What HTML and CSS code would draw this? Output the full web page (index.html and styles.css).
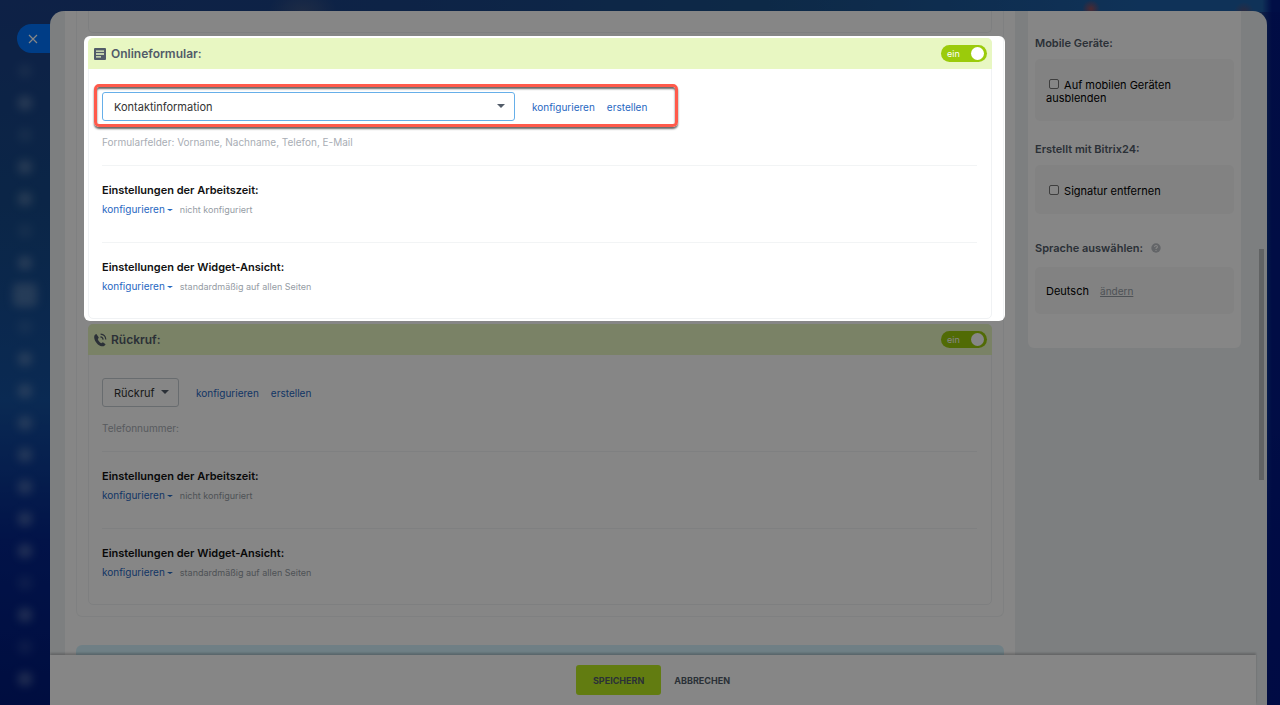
FILE: index.html
```html
<!DOCTYPE html>
<html lang="de">
<head>
    <meta charset="UTF-8">
    <meta name="viewport" content="width=device-width, initial-scale=1.0">
    <title>Widget bearbeiten</title>
    <link rel="stylesheet" href="styles.css">
</head>
<body>
    <div class="rail">
        <span class="rail-icon faint"></span>
        <span class="rail-icon"></span>
        <span class="rail-icon faint"></span>
        <span class="rail-icon"></span>
        <span class="rail-icon"></span>
        <span class="rail-icon faint"></span>
        <span class="rail-icon"></span>
        <span class="rail-icon active"></span>
        <span class="rail-icon faint"></span>
        <span class="rail-icon"></span>
        <span class="rail-icon"></span>
        <span class="rail-icon"></span>
        <span class="rail-icon"></span>
        <span class="rail-icon"></span>
        <span class="rail-icon"></span>
        <span class="rail-icon"></span>
        <span class="rail-icon faint"></span>
        <span class="rail-icon"></span>
        <span class="rail-icon faint"></span>
        <span class="rail-icon"></span>
    </div>

    <button class="close-btn" type="button" aria-label="Schließen">
        <svg width="10" height="10" viewBox="0 0 10 10"><path d="M1 1l8 8M9 1L1 9" stroke="#fff" stroke-width="1.2" fill="none"/></svg>
    </button>

    <div class="panel">
        <div class="content">
            <main class="main">
                <div class="group">
                    <div class="card card-prev"></div>

                    <section class="card">
                        <div class="card-header">
                            <svg class="card-icon" width="14" height="14" viewBox="0 0 14 14">
                                <path d="M2 1h10a1 1 0 0 1 1 1v10a1 1 0 0 1-1 1H2a1 1 0 0 1-1-1V2a1 1 0 0 1 1-1z" fill="#525c69"/>
                                <path d="M3 4.2h8M3 7h8M3 9.8h5" stroke="#e8f7c2" stroke-width="1.3"/>
                            </svg>
                            <h2>Onlineformular:</h2>
                            <button class="switch" type="button" role="switch" aria-checked="true">ein</button>
                        </div>
                        <div class="card-body">
                            <div class="form-row highlighted">
                                <select class="select focused" aria-label="Onlineformular">
                                    <option>Kontaktinformation</option>
                                </select>
                                <a href="#">konfigurieren</a>
                                <a href="#">erstellen</a>
                            </div>
                            <p class="hint">Formularfelder: Vorname, Nachname, Telefon, E-Mail</p>
                            <div class="setting">
                                <h3>Einstellungen der Arbeitszeit:</h3>
                                <div class="setting-row"><a class="drop" href="#">konfigurieren</a><span>nicht konfiguriert</span></div>
                            </div>
                            <div class="setting">
                                <h3>Einstellungen der Widget-Ansicht:</h3>
                                <div class="setting-row"><a class="drop" href="#">konfigurieren</a><span>standardmäßig auf allen Seiten</span></div>
                            </div>
                        </div>
                    </section>

                    <section class="card">
                        <div class="card-header">
                            <svg class="card-icon" width="14" height="14" viewBox="0 0 14 14">
                                <path d="M3.4 1C1.8 1.5 1 2.8 1.2 4.7 1.7 8.6 5.2 12.7 8.8 13.3c1.8.3 3.2-.5 3.800-2L9.900 9.300 8.200 10.200C6.700 9.400 5.400 7.800 4.800 6.200L5.800 4.600z" fill="#525c69"/>
                                <path d="M7.400 3.900c1.500.1 2.600 1.200 2.700 2.700M7.600 1.200c3 .2 5 2.400 5.200 5.300" stroke="#525c69" stroke-width="1.2" fill="none"/>
                            </svg>
                            <h2>Rückruf:</h2>
                            <button class="switch" type="button" role="switch" aria-checked="true">ein</button>
                        </div>
                        <div class="card-body">
                            <div class="form-row">
                                <select class="select small" aria-label="Rückruf">
                                    <option>Rückruf</option>
                                </select>
                                <a href="#">konfigurieren</a>
                                <a href="#">erstellen</a>
                            </div>
                            <p class="hint">Telefonnummer:</p>
                            <div class="setting">
                                <h3>Einstellungen der Arbeitszeit:</h3>
                                <div class="setting-row"><a class="drop" href="#">konfigurieren</a><span>nicht konfiguriert</span></div>
                            </div>
                            <div class="setting">
                                <h3>Einstellungen der Widget-Ansicht:</h3>
                                <div class="setting-row"><a class="drop" href="#">konfigurieren</a><span>standardmäßig auf allen Seiten</span></div>
                            </div>
                        </div>
                    </section>
                </div>
                <div class="next-group"></div>
            </main>

            <aside class="side">
                <h4>Mobile Geräte:</h4>
                <div class="side-box">
                    <label><input type="checkbox"> Auf mobilen Geräten ausblenden</label>
                </div>
                <h4>Erstellt mit Bitrix24:</h4>
                <div class="side-box">
                    <label><input type="checkbox"> Signatur entfernen</label>
                </div>
                <h4 class="with-help">Sprache auswählen:
                    <svg width="10" height="10" viewBox="0 0 10 10">
                        <circle cx="5" cy="5" r="4.7" fill="#bdc1c6"/>
                        <path d="M3.6 3.9C3.6 2 6.5 2.2 6.4 3.9 6.3 4.8 5 4.8 5 6M5 6.9v1" stroke="#fff" stroke-width="1.1" fill="none"/>
                    </svg>
                </h4>
                <div class="side-box language">Deutsch <a href="#">ändern</a></div>
            </aside>
        </div>
        <div class="scrollbar"></div>

        <footer class="footer">
            <button class="btn btn-save" type="button">SPEICHERN</button>
            <button class="btn btn-cancel" type="button">ABBRECHEN</button>
        </footer>
    </div>

    <div class="spotlight"></div>
</body>
</html>
```
FILE: styles.css
```css
*, *::before, *::after {
    box-sizing: border-box;
}
body {
    margin: 0;
    height: 100vh;
    padding: 11px 13px 0 50px;
    position: relative;
    overflow: hidden;
    font-family: Inter, "Liberation Sans", sans-serif;
    font-size: 10px;
    line-height: 14px;
    color: #000;
    background:
        radial-gradient(circle at 1091px 9px, rgba(200, 70, 60, 0.7), transparent 9px),
        radial-gradient(circle at 1244px 12px, rgba(120, 70, 90, 0.6), transparent 10px),
        radial-gradient(ellipse at 303px 12px, rgba(90, 100, 130, 0.5), transparent 34px),
        linear-gradient(to right, transparent 50px, transparent 1262px, rgba(0, 20, 130, 0.9) 1272px),
        linear-gradient(to right, transparent, #1a4386 30%, #1a4f88 60%, #1e60a8 90%) top / 100% 12px no-repeat,
        linear-gradient(to bottom, #1b3f85 0, #154887 200px, #14509e 400px, #04258a 540px, #001a7a 705px);
}
h2, h3, h4, p {
    margin: 0;
}
a {
    color: #1f67c1;
    text-decoration: none;
}

/* blurred icons of the page behind */
.rail {
    position: absolute;
    top: 55px;
    left: 0;
    width: 50px;
    display: flex;
    flex-direction: column;
    align-items: center;
}
.rail-icon {
    width: 14px;
    height: 14px;
    margin: 9px 0;
    border-radius: 5px;
    background: rgba(170, 185, 210, 0.35);
    filter: blur(4px);
}
.rail-icon.faint {
    opacity: 0.4;
}
.rail-icon.active {
    width: 24px;
    height: 24px;
    margin: 4px 0;
}

.close-btn {
    position: absolute;
    top: 24px;
    left: 17px;
    width: 40px;
    height: 29px;
    padding: 0 16px 0 7px;
    border: none;
    border-radius: 15px 0 0 15px;
    background: #0075ff;
    display: flex;
    align-items: center;
    justify-content: center;
}

.panel {
    position: relative;
    height: 100%;
    display: flex;
    flex-direction: column;
    overflow: hidden;
    border-radius: 14px 14px 0 0;
    background: #eef2f4;
}
.content {
    flex: 1;
    min-height: 0;
    display: flex;
    align-items: flex-start;
    padding: 0 26px 0 15px;
    overflow: hidden;
}
.main {
    flex: 1;
    padding: 0 11px;
    background: #fff;
}
.group {
    padding: 0 11px 11px;
    border: 1px solid #f2f4f5;
    border-top: none;
    border-radius: 0 0 6px 6px;
}
.next-group {
    height: 40px;
    margin-top: 28px;
    border-radius: 6px 6px 0 0;
    background: #d3f2fd;
}

.card {
    margin-top: 5px;
    border: 1px solid #f0f2f4;
    border-radius: 5px;
}
.card-prev {
    height: 22px;
    margin-top: 0;
    border-top: none;
    border-radius: 0 0 5px 5px;
}
.card-header {
    display: flex;
    align-items: center;
    height: 31px;
    margin: -1px -1px 0;
    padding: 0 5px;
    border-radius: 5px 5px 0 0;
    background: #e8f7c2;
}
.card-icon {
    margin-right: 4px;
}
.card-header h2 {
    flex: 1;
    font-size: 12px;
    font-weight: 600;
    color: #525c69;
}
.switch {
    position: relative;
    width: 46px;
    height: 17px;
    padding: 0 0 0 6px;
    border: none;
    border-radius: 9px;
    background: #9bcb0b;
    color: #fff;
    font-family: inherit;
    font-size: 9px;
    text-align: left;
}
.switch::after {
    content: "";
    position: absolute;
    top: 2px;
    right: 3px;
    width: 13px;
    height: 13px;
    border-radius: 50%;
    background: #fff;
}

.card-body {
    padding: 23px 14px 0 13px;
}
.form-row {
    position: relative;
    display: flex;
    align-items: center;
    gap: 12px;
}
.highlighted::after {
    content: "";
    position: absolute;
    top: -8px;
    left: -8px;
    width: 584px;
    height: 43px;
    border: 3px solid #ff5a4b;
    border-radius: 5px;
    box-shadow: 0 2px 2px rgba(0, 0, 0, 0.6), inset 0 2px 2px rgba(0, 0, 0, 0.6);
    pointer-events: none;
}
.select {
    appearance: none;
    width: 413px;
    height: 29px;
    margin-right: 5px;
    padding: 0 11px;
    border: 1px solid #c6cdd3;
    border-radius: 3px;
    background: #fff;
    color: #333;
    font-family: inherit;
    font-size: 11px;
}
.select.focused {
    border-color: #66afe9;
}
.select.small {
    width: 77px;
}
.form-row::before {
    content: "";
    position: absolute;
    top: 12px;
    left: 395px;
    border: 4px solid transparent;
    border-top-color: #525c69;
    border-bottom: none;
}
.form-row:not(.highlighted)::before {
    left: 59px;
}
.hint {
    margin: 14px 0 16px;
    color: #a8adb4;
}
.setting {
    padding: 17px 0 25px;
    border-top: 1px solid #f2f4f5;
}
.setting:last-child {
    padding-bottom: 24px;
}
.setting h3 {
    margin-bottom: 5px;
    font-size: 11px;
    font-weight: 600;
    color: #111;
}
.setting-row {
    display: flex;
    align-items: baseline;
    gap: 7px;
}
.setting-row span {
    font-size: 9px;
    color: #959ca4;
}
.drop::after {
    content: "";
    display: inline-block;
    margin-left: 2px;
    vertical-align: 2px;
    border: solid transparent;
    border-width: 2px 3px 0;
    border-top-color: #1f67c1;
}

.side {
    width: 213px;
    margin-left: 13px;
    padding: 25px 7px 13px;
    border-radius: 0 0 6px 6px;
    background: #fff;
}
.side h4 {
    margin-bottom: 9px;
    font-size: 11px;
    font-weight: 600;
    color: #525c69;
}
.side .with-help {
    display: flex;
    align-items: center;
    gap: 8px;
    margin: 27px 0 12px;
}
.side-box {
    margin-bottom: 21px;
    padding: 20px 11px 16px;
    border-radius: 5px;
    background: #f8f8f8;
    font-size: 11px;
    line-height: 13px;
}
.side-box label {
    display: block;
}
.side-box input {
    appearance: none;
    width: 10px;
    height: 10px;
    margin: 0 2px 0 3px;
    border: 1px solid #767676;
    border-radius: 2px;
    background: #fff;
}
.side-box.language {
    padding: 18px 11px 16px;
}
.language a {
    margin-left: 8px;
    font-size: 10px;
    color: #959ca4;
    text-decoration: underline;
}

.scrollbar {
    position: absolute;
    top: 238px;
    right: 3px;
    width: 5px;
    height: 231px;
    background: #b9bcbe;
}

.footer {
    position: relative;
    display: flex;
    justify-content: center;
    align-items: center;
    gap: 13px;
    height: 50px;
    margin-right: 11px;
    background: #fff;
    box-shadow: 0 -2px 2px rgba(0, 0, 0, 0.2);
}
.btn {
    height: 30px;
    padding: 0;
    border: none;
    border-radius: 3px;
    background: none;
    color: #525c69;
    font-family: inherit;
    font-size: 9px;
    font-weight: 700;
}
.btn-save {
    padding: 0 17px;
    background: #bbed21;
}

/* dims the page and leaves the web form block lit */
.spotlight {
    position: absolute;
    top: 36px;
    left: 84px;
    right: 275px;
    height: 285px;
    border-radius: 6px;
    box-shadow: 0 0 0 2000px rgba(0, 0, 0, 0.475);
    pointer-events: none;
}
```
